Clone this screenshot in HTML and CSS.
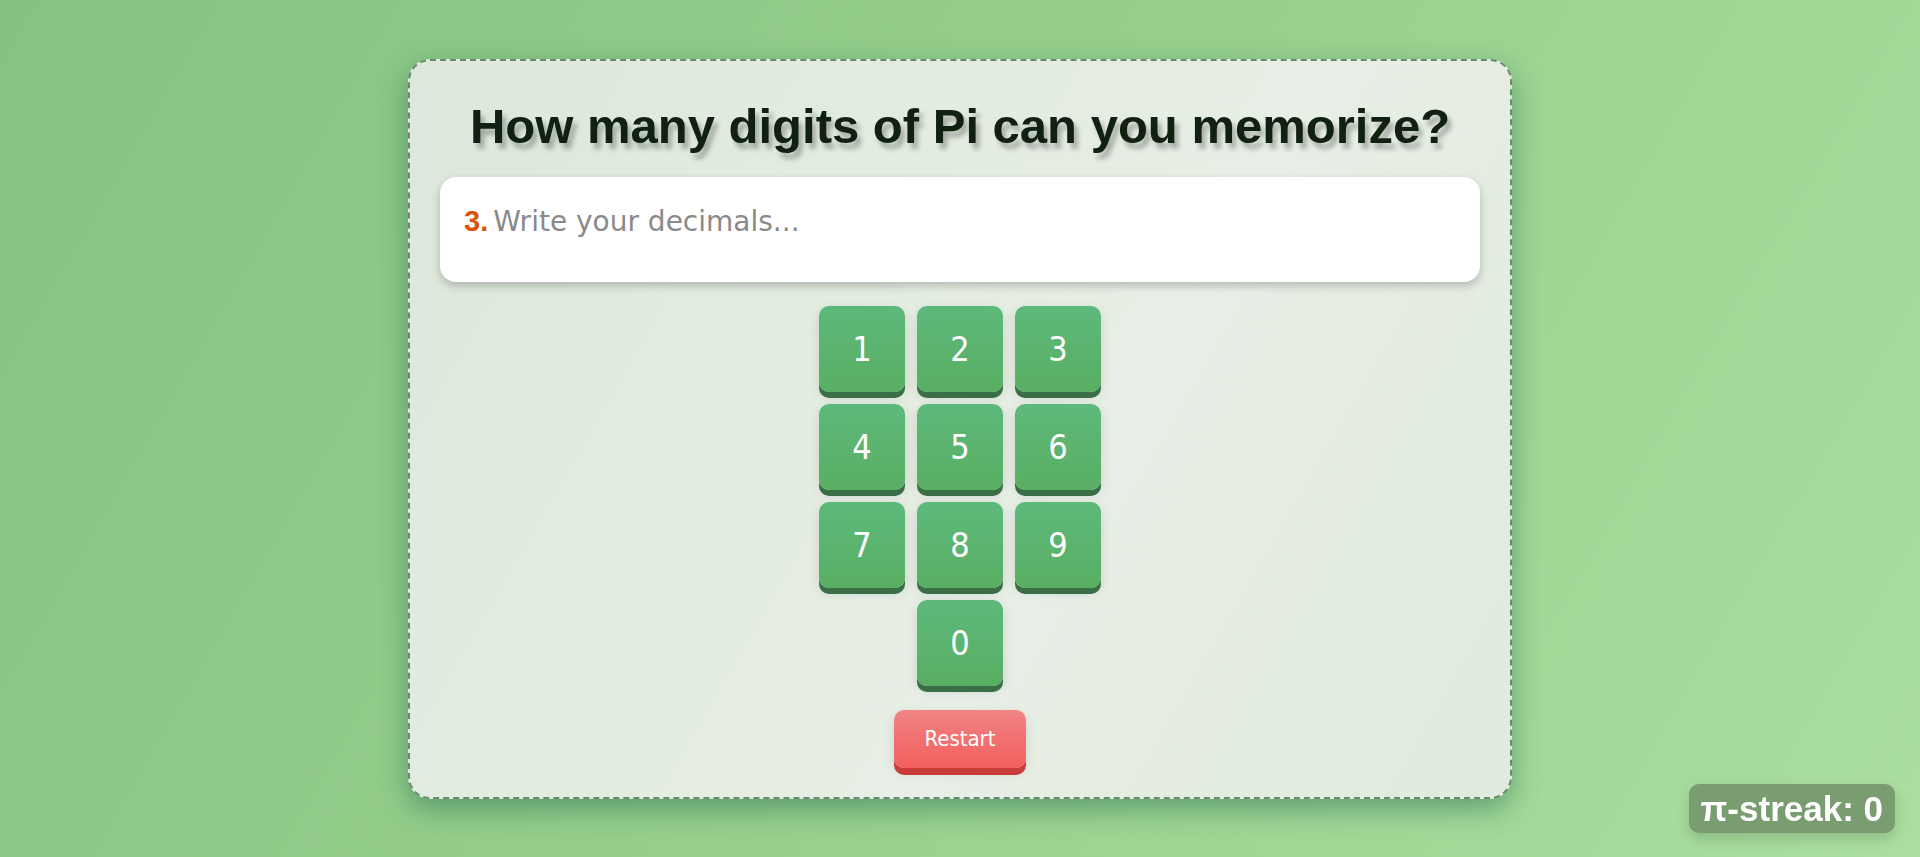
FILE: index.html
```html
<!DOCTYPE html>
<html lang="en">
<head>
<meta charset="utf-8">
<title>Pi memorizer</title>
<link rel="stylesheet" href="styles.css">
</head>
<body>
<main class="card">
  <h1 class="title">How many digits of Pi can you memorize?</h1>
  <div class="entry">
    <span class="prefix">3.</span><span class="placeholder">Write your decimals...</span>
  </div>
  <div class="keypad">
    <button class="key">1</button>
    <button class="key">2</button>
    <button class="key">3</button>
    <button class="key">4</button>
    <button class="key">5</button>
    <button class="key">6</button>
    <button class="key">7</button>
    <button class="key">8</button>
    <button class="key">9</button>
    <button class="key key-zero">0</button>
  </div>
  <button class="restart">Restart</button>
</main>
<div class="streak">π-streak: 0</div>
</body>
</html>
```
FILE: styles.css
```css
html, body {
  margin: 0;
  height: 100%;
}
body {
  background: linear-gradient(120deg, #87c282 0%, #97d08c 50%, #aadf9f 100%);
  display: flex;
  align-items: center;
  justify-content: center;
  font-family: "Liberation Sans", Arial, sans-serif;
}
.card {
  width: 1040px;
  box-sizing: content-box;
  padding: 38px 30px 29px;
  border: 2px dashed #6a8a70;
  border-radius: 22px;
  background: linear-gradient(120deg, #dce8da 0%, #e8efe6 60%, #e0eade 100%);
  box-shadow: 0 10px 28px rgba(20, 90, 70, 0.45);
  display: flex;
  flex-direction: column;
  align-items: center;
  gap: 24px;
}
.title {
  margin: 0;
  font-size: 49px;
  font-weight: 700;
  color: #10220f;
  text-shadow: 4px 6px 5px rgba(0, 0, 0, 0.28);
  line-height: 54px;
}
.entry {
  align-self: stretch;
  height: 105px;
  box-sizing: border-box;
  padding: 28px 24px;
  background: #fff;
  border-radius: 16px;
  box-shadow: 0 4px 10px rgba(0, 0, 0, 0.22);
  display: flex;
  align-items: baseline;
  gap: 5px;
}
.prefix {
  font-family: "Liberation Sans", Arial, sans-serif;
  font-weight: 700;
  font-size: 29px;
  color: #d9550b;
}
.placeholder {
  font-family: "DejaVu Sans", sans-serif;
  font-size: 28px;
  color: #8a8a8a;
}
.keypad {
  display: grid;
  grid-template-columns: repeat(3, 86px);
  grid-auto-rows: 86px;
  gap: 12px;
}
.key {
  border: none;
  border-radius: 10px;
  background: linear-gradient(180deg, #5db97b 0%, #59ae62 100%);
  color: #fff;
  font-family: "DejaVu Sans Condensed", "DejaVu Sans", sans-serif;
  font-size: 34px;
  box-shadow: 0 6px 0 #3a6e47, 0 4px 12px rgba(0, 0, 0, 0.12);
  padding: 0;
}
.key-zero {
  grid-column: 2;
}
.restart {
  width: 132px;
  height: 58px;
  border: none;
  border-radius: 10px;
  background: linear-gradient(180deg, #f08383 0%, #f45f5f 100%);
  color: #fff;
  font-family: "DejaVu Sans Condensed", "DejaVu Sans", sans-serif;
  font-size: 22px;
  box-shadow: 0 7px 0 #c83c3c, 0 4px 12px rgba(0, 0, 0, 0.12);
  padding: 0;
}
.streak {
  position: fixed;
  right: 25px;
  bottom: 24px;
  height: 49px;
  box-sizing: border-box;
  padding: 0 12px;
  display: flex;
  align-items: center;
  background: #799c70;
  border-radius: 10px;
  color: #fff;
  font-family: "Liberation Sans", Arial, sans-serif;
  font-weight: 700;
  font-size: 35px;
  box-shadow: 0 6px 14px rgba(0, 0, 0, 0.15);
}
```
